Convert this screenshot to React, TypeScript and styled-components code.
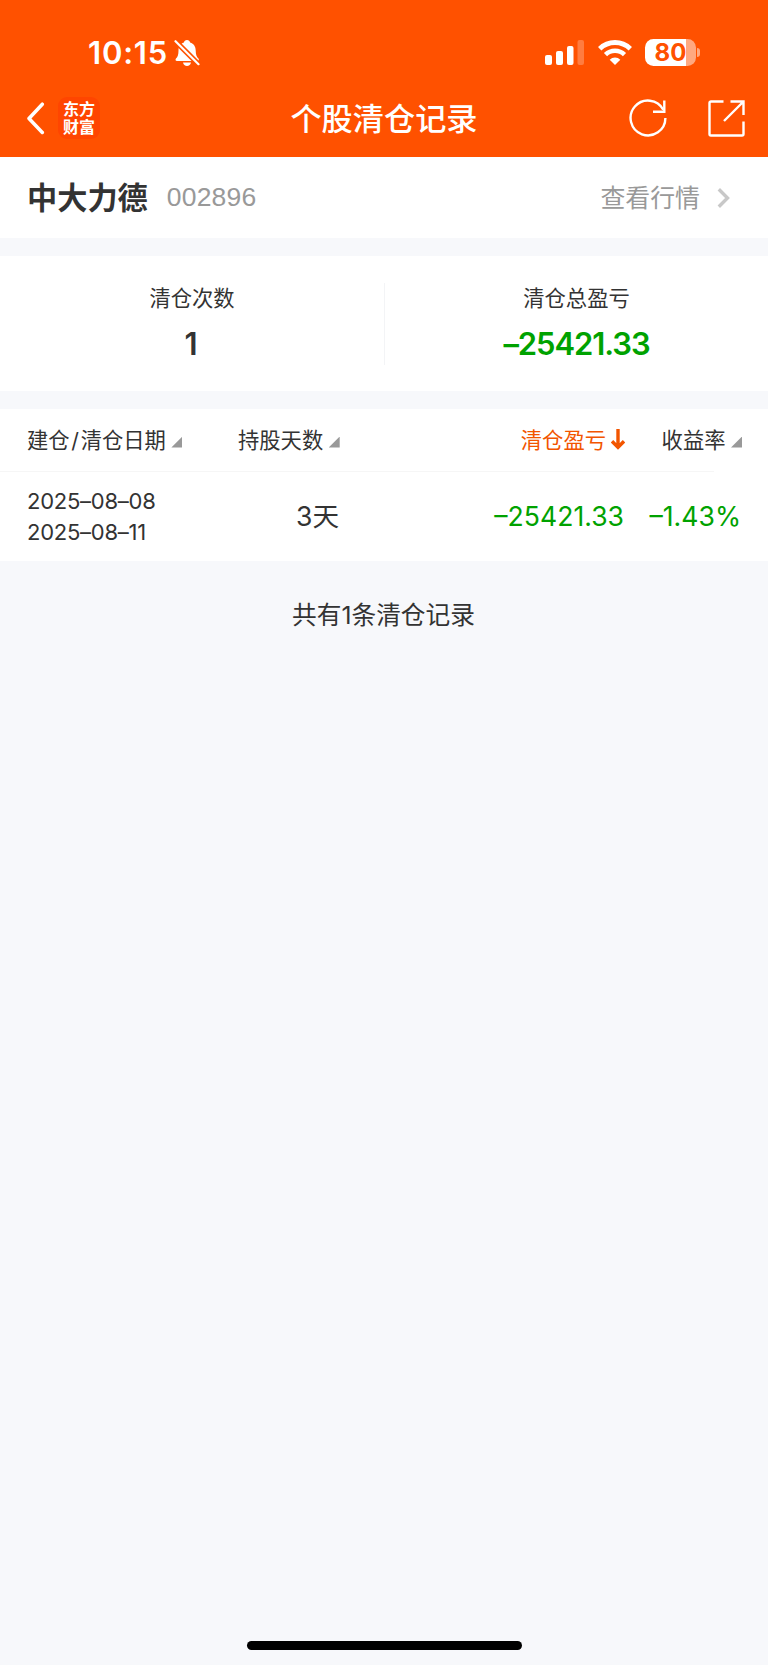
import React from "react";
import styled, { createGlobalStyle } from "styled-components";

const GlobalStyle = createGlobalStyle`
  body {
    margin: 0;
    background: #f7f8fb;
  }
  * {
    box-sizing: border-box;
  }
`;

const Screen = styled.main`
  width: 768px;
  height: 1665px;
  display: flex;
  flex-direction: column;
  background: #f7f8fb;
  color: #333;
  font-family: Inter, "Noto Sans CJK SC", sans-serif;
  white-space: nowrap;
  overflow: hidden;
`;

const Header = styled.header`
  height: 157px;
  flex: none;
  background: #ff5100;
  color: #fff;
`;

const StatusBar = styled.div`
  height: 79px;
  padding: 26px 68px 0 88px;
  display: flex;
  justify-content: space-between;
`;

const StatusGroup = styled.div<{ $gap: number }>`
  height: 53px;
  display: flex;
  align-items: center;
  gap: ${(p) => p.$gap}px;
`;

const Clock = styled.span`
  width: 80px;
  font-size: 31px;
  font-weight: 600;
  line-height: 53px;
  letter-spacing: 0.8px;
`;

const Battery = styled.div`
  display: flex;
  align-items: center;
  gap: 1px;
`;

const BatteryBody = styled.div`
  width: 51px;
  height: 27px;
  border-radius: 8.5px;
  background: linear-gradient(to right, #fff 41px, #ffa880 41px);
  color: #ff5100;
  font-size: 24px;
  font-weight: 700;
  line-height: 27px;
  text-align: center;
`;

const BatteryTip = styled.div`
  width: 3px;
  height: 9px;
  border-radius: 0 4px 4px 0;
  background: #ffa880;
`;

const NavBar = styled.nav`
  height: 78px;
  padding: 0 23px 0 27px;
  display: grid;
  grid-template-columns: 120px 1fr 120px;
  align-items: center;
`;

const NavStart = styled.div`
  display: flex;
  align-items: center;
  gap: 12px;
`;

const NavEnd = styled.div`
  display: flex;
  justify-content: flex-end;
  align-items: center;
  gap: 41px;
`;

const Brand = styled.div`
  width: 42px;
  height: 42px;
  padding-top: 4px;
  border-radius: 9px;
  background: #ff4500;
  font-size: 16px;
  font-weight: 700;
  line-height: 17.5px;
  text-align: center;
`;

const Title = styled.h1`
  margin: 1px 0 0 -4px;
  font-size: 31.2px;
  font-weight: 500;
  line-height: 44px;
  text-align: center;
`;

const StockRow = styled.section`
  height: 81px;
  flex: none;
  padding: 0 38px 0 27px;
  display: flex;
  align-items: center;
  background: #fff;
`;

const StockName = styled.span`
  font-size: 30.2px;
  font-weight: 600;
  line-height: 44px;
`;

const StockCode = styled.span`
  margin: -1px 0 0 19px;
  color: #999;
  font-family: "Liberation Sans", sans-serif;
  font-size: 26.5px;
  line-height: 40px;
  letter-spacing: 0.2px;
`;

const QuoteLink = styled.a`
  margin-left: auto;
  display: flex;
  align-items: center;
  gap: 17px;
  color: #999;
  font-size: 24.9px;
  line-height: 40px;
`;

const Summary = styled.section`
  height: 135px;
  flex: none;
  margin: 18px 0;
  display: grid;
  grid-template-columns: 384px 1px 383px;
  align-items: center;
  background: #fff;
`;

const Separator = styled.div`
  height: 82px;
  background: #f3f4f6;
`;

const Stat = styled.div`
  display: flex;
  flex-direction: column;
  align-items: center;
`;

const StatLabel = styled.span`
  font-size: 21.3px;
  line-height: 36px;
`;

const StatValue = styled.strong<{ $loss?: boolean }>`
  margin-top: 5px;
  font-size: 31px;
  font-weight: 600;
  line-height: 46px;
  letter-spacing: ${(p) => (p.$loss ? "-1.1px" : "0")};
  margin-right: ${(p) => (p.$loss ? 0 : 2)}px;
  color: ${(p) => (p.$loss ? "#00a200" : "#333")};
`;

const Table = styled.section`
  flex: none;
  background: #fff;
`;

const Row = styled.div<{ $height: number; $line?: boolean }>`
  height: ${(p) => p.$height}px;
  padding: 0 26px 2px 27px;
  display: grid;
  grid-template-columns: 211px 106px 281px 1fr;
  align-items: center;
  background: ${(p) =>
    p.$line
      ? "linear-gradient(#f6f6f6, #f6f6f6) left bottom / 714px 1px no-repeat"
      : "none"};
`;

const HeadCell = styled.div<{ $end?: boolean; $active?: boolean }>`
  display: flex;
  align-items: center;
  justify-content: ${(p) => (p.$end ? "flex-end" : "flex-start")};
  gap: ${(p) => (p.$active ? 5 : 5.5)}px;
  color: ${(p) => (p.$active ? "#f25500" : "#333")};
  font-size: 21.3px;
  line-height: 36px;
`;

const Slash = styled.span`
  margin: 0 1.7px;
`;

const SortMark = styled.i`
  width: 11px;
  height: 11px;
  margin-top: 5px;
  background: #999;
  clip-path: polygon(100% 0, 100% 100%, 0 100%);
`;

const Dates = styled.div`
  padding-top: 2px;
  font-size: 22px;
  line-height: 31px;
  letter-spacing: -0.25px;
`;

const Cell = styled.div<{ $loss?: boolean }>`
  padding-right: ${(p) => (p.$loss ? 1 : 5)}px;
  font-size: 26.6px;
  line-height: 40px;
  text-align: right;
  color: ${(p) => (p.$loss ? "#00a200" : "#333")};
`;

const Total = styled.p`
  margin: 36px 1px 0 0;
  font-size: 24.7px;
  line-height: 36px;
  text-align: center;
`;

const HomeIndicator = styled.div`
  width: 275px;
  height: 9px;
  margin: auto auto 15px;
  border-radius: 5px;
  background: #000;
`;

const MutedBell = () => (
  <svg width="26" height="28" viewBox="0 0 26 28" fill="none">
    <path
      d="M13 1c1.700 0 2.800 1 3.100 2.400 3.800 1.200 5.600 4.200 5.600 8.100 0 4.400 1 6.300 2.700 8 .9 1 .5 2.500-1 2.500H3c-1.500 0-1.900-1.500-1-2.500 1.700-1.700 2.500-3.600 2.500-8 0-3.900 1.700-6.900 5.400-8.100C10.200 2 11.300 1 13 1Z"
      fill="#fff"
    />
    <path d="M9 23.500h8c-.4 2.200-1.900 3.500-4 3.500s-3.600-1.300-4-3.500Z" fill="#fff" />
    <path d="M0 0.700 26 26.700" stroke="#ff5100" strokeWidth="5.400" />
    <path d="M1.500 2.200 24.500 25.200" stroke="#fff" strokeWidth="2.200" strokeLinecap="round" />
  </svg>
);

const Signal = () => (
  <svg width="39" height="25" viewBox="0 0 39 25" fill="#fff">
    <rect x="0" y="15" width="7" height="10" rx="2" />
    <rect x="11" y="11" width="7" height="14" rx="2" />
    <rect x="22" y="6" width="6.500" height="19" rx="2" />
    <rect x="32.500" y="0" width="6.500" height="25" rx="2" opacity=".25" />
  </svg>
);

const Wifi = () => (
  <svg width="34" height="25" viewBox="0 0 34 25" fill="none">
    <path d="M1.700 8.700a22 22 0 0 1 30.600 0" stroke="#fff" strokeWidth="4.800" />
    <path d="M7.500 14.600a13.600 13.600 0 0 1 19 0" stroke="#fff" strokeWidth="4.600" />
    <path d="M17 25l-5.300-5.300a7.500 7.500 0 0 1 10.600 0Z" fill="#fff" />
  </svg>
);

const BackIcon = () => (
  <svg width="19" height="34" viewBox="0 0 19 34" fill="none">
    <path d="M15.300 3.200 2 17.500l13.300 14" stroke="#fff" strokeWidth="3.500" strokeLinecap="round" strokeLinejoin="round" />
  </svg>
);

const RefreshIcon = () => (
  <svg width="38" height="38" viewBox="0 0 38 38" fill="none" stroke="#fff" strokeWidth="2.400">
    <path d="M36.400 19A17.400 17.400 0 1 1 34.300 10.700" />
    <path d="M35.300 1.500v11.300H24" />
  </svg>
);

const ShareIcon = () => (
  <svg width="37" height="37" viewBox="0 0 37 37" fill="none" stroke="#fff" strokeWidth="2.400">
    <path d="M15.500 1.500H3a1.500 1.500 0 0 0-1.500 1.500v31A1.500 1.500 0 0 0 3 35.500h31a1.500 1.500 0 0 0 1.500-1.500V21.500" />
    <path d="M22.500 1.500h13V15M35.500 1.500l-19.500 19.500" />
  </svg>
);

const ChevronIcon = () => (
  <svg width="13" height="20" viewBox="0 0 13 20" fill="none">
    <path d="M1.800 1.300 10.500 10l-8.700 8.700" stroke="#c8c8c8" strokeWidth="3.400" />
  </svg>
);

const DownArrow = () => (
  <svg width="14" height="21" viewBox="0 0 14 21" fill="none" stroke="#f25500" strokeWidth="3.400">
    <path d="M7 0v18.500M1 12.300l6 6 6-6" />
  </svg>
);

export default function App() {
  return (
    <>
      <GlobalStyle />
      <Screen>
        <Header>
          <StatusBar>
            <StatusGroup $gap={6}>
              <Clock>10:15</Clock>
              <MutedBell />
            </StatusGroup>
            <StatusGroup $gap={13.5}>
              <Signal />
              <Wifi />
              <Battery>
                <BatteryBody>80</BatteryBody>
                <BatteryTip />
              </Battery>
            </StatusGroup>
          </StatusBar>
          <NavBar>
            <NavStart>
              <BackIcon />
              <Brand>
                东方
                <br />
                财富
              </Brand>
            </NavStart>
            <Title>个股清仓记录</Title>
            <NavEnd>
              <RefreshIcon />
              <ShareIcon />
            </NavEnd>
          </NavBar>
        </Header>

        <StockRow>
          <StockName>中大力德</StockName>
          <StockCode>002896</StockCode>
          <QuoteLink>
            查看行情
            <ChevronIcon />
          </QuoteLink>
        </StockRow>

        <Summary>
          <Stat>
            <StatLabel>清仓次数</StatLabel>
            <StatValue>1</StatValue>
          </Stat>
          <Separator />
          <Stat>
            <StatLabel>清仓总盈亏</StatLabel>
            <StatValue $loss>–25421.33</StatValue>
          </Stat>
        </Summary>

        <Table>
          <Row $height={63} $line>
            <HeadCell>
              <span>
                建仓<Slash>/</Slash>清仓日期
              </span>
              <SortMark />
            </HeadCell>
            <HeadCell>
              持股天数
              <SortMark />
            </HeadCell>
            <HeadCell $end $active>
              清仓盈亏
              <DownArrow />
            </HeadCell>
            <HeadCell $end>
              收益率
              <SortMark />
            </HeadCell>
          </Row>
          <Row $height={89}>
            <Dates>
              2025–08–08
              <br />
              2025–08–11
            </Dates>
            <Cell>3天</Cell>
            <Cell $loss>–25421.33</Cell>
            <Cell $loss>–1.43%</Cell>
          </Row>
        </Table>

        <Total>共有1条清仓记录</Total>
        <HomeIndicator />
      </Screen>
    </>
  );
}
